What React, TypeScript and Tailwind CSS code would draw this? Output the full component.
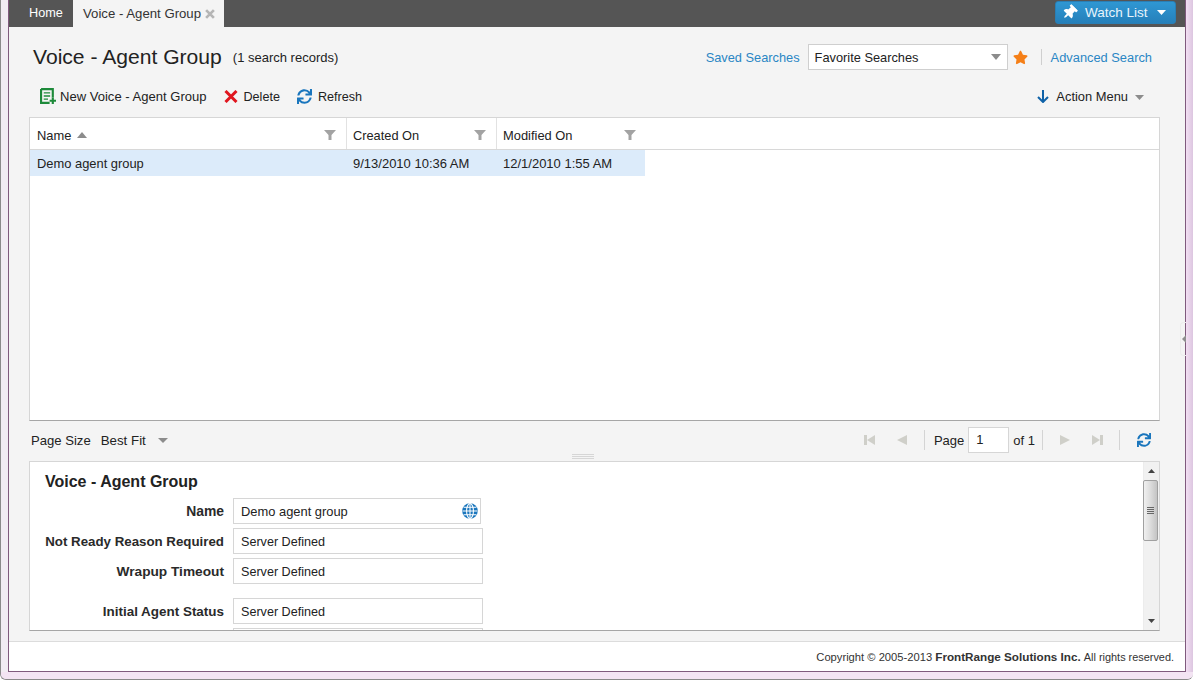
import React from "react";
import { FaSync, FaStar, FaThumbtack } from "react-icons/fa";

const Caret = ({ className = "", color = "#8c8c8c", w = 10, h = 6 }: { className?: string; color?: string; w?: number; h?: number }) => (
  <svg width={w} height={h} viewBox="0 0 10 6" className={className} preserveAspectRatio="none"><path d="M0 0H10L5 6Z" fill={color} /></svg>
);
const Filter = () => (
  <svg width="12" height="10" viewBox="0 0 12 10"><path d="M0 0H12L7.5 5V10H4.5V5Z" fill="#a3a3a3" /></svg>
);
const Nav = ({ dir, bar }: { dir: "l" | "r"; bar?: boolean }) => (
  <svg width="11" height="10" viewBox="0 0 11 10">
    {dir === "l" ? <path d={bar ? "M3 5L11 0V10Z" : "M0 5L10 0V10Z"} fill="#cfcfc9" /> : <path d={bar ? "M0 0L8 5L0 10Z" : "M0 0L10 5L0 10Z"} fill="#cfcfc9" />}
    {bar && <rect x={dir === "l" ? 0 : 8} y="0" width="3" height="10" fill="#cfcfc9" />}
  </svg>
);
const Sep = () => <div className="w-px h-[20px] bg-[#d4d4d4]" />;

const Field = ({ value, w = "w-[250px]", children, textClass = "text-[12.6px] pt-[2px]" }: { value: string; w?: string; children?: React.ReactNode; textClass?: string }) => (
  <div className={`${w} h-[26px] shrink-0 border border-[#d6d6d6] bg-white pl-[7px] flex items-center justify-between pr-[2px] leading-none`}>
    <span className={textClass}>{value}</span>
    {children}
  </div>
);

const Row = ({ label, children, className = "", labelClass = "text-[13.3px] pt-[2px]" }: { label: string; children: React.ReactNode; className?: string; labelClass?: string }) => (
  <div className={`flex items-center ${className}`}>
    <div className={`w-[179px] text-right font-bold text-[#2a2a2a] mr-[9px] shrink-0 whitespace-nowrap ${labelClass}`}>{label}</div>
    {children}
  </div>
);

export default function App() {
  return (
    <div className="w-[1193px] h-[680px] overflow-hidden flex flex-col text-[13px] text-[#222] bg-[#f1e3f1] rounded-b-[6px] border-b border-l border-[#8a8a8a]" style={{ fontFamily: '"Liberation Sans", Arial, sans-serif' }}>
      <div className="flex flex-1 min-h-0">
        <div className="w-[7px] shrink-0 bg-[#f1ecf3]" />
        <div className="w-[1178px] shrink-0 flex flex-col border-l border-r border-b border-[#7f5a7d] bg-[#f4f4f4]">
          {/* tab bar */}
          <div className="h-[27px] shrink-0 bg-[#555555] flex items-stretch">
            <div className="w-[64px] pl-[20px] flex items-center text-white text-[12.7px]">Home</div>
            <div className="w-[151px] pl-[10px] bg-[#f4f4f4] flex items-center text-[#333]">
              <span className="text-[13.2px]">Voice - Agent Group</span>
              <svg width="10" height="10" viewBox="0 0 9 9" className="ml-[4px]"><path d="M1 1L8 8M8 1L1 8" stroke="#b5b5b5" strokeWidth="2.4" /></svg>
            </div>
            <div className="flex-1" />
            <div className="mt-px mr-[9px] w-[121px] h-[23px] rounded-[3px] bg-gradient-to-b from-[#2f97d3] to-[#2680ba] border border-[#2a7fb5] flex items-center text-white text-[13.5px]">
              <FaThumbtack size={15} color="#fff" className="ml-[6px] rotate-45" />
              <span className="ml-[8px] pt-[1px] text-[#e8f4fb]">Watch List</span>
              <Caret color="#fff" w={9} h={5} className="ml-[9px]" />
            </div>
          </div>

          {/* heading */}
          <div className="h-[53px] shrink-0 flex items-center pl-[24px] pr-[33px] pt-[7px]">
            <div className="text-[21.1px] text-[#222]">Voice - Agent Group</div>
            <div className="ml-[11px] pt-[2px]">(1 search records)</div>
            <div className="flex-1" />
            <span className="text-[#2a86c4] mr-[8px] text-[12.8px] pt-[2px]">Saved Searches</span>
            <div className="w-[200px] h-[26px] border border-[#cfcfcf] bg-white pl-[6px] pr-[6px] flex items-center justify-between">
              <span className="text-[12.8px] pt-[2px]">Favorite Searches</span>
              <Caret color="#8c8c8c" w={10} h={6} />
            </div>
            <FaStar size={15} color="#f57f17" className="ml-[5px]" />
            <div className="w-px h-[16px] bg-[#cfcfcf] ml-[13px] mr-[9px]" />
            <span className="text-[#2a86c4] text-[12.85px] pt-[2px]">Advanced Search</span>
          </div>

          {/* toolbar */}
          <div className="h-[37px] shrink-0 flex items-center pl-[31px] pr-[41px] pb-[5px]">
            <svg width="16" height="16" viewBox="0 0 15 15" className="shrink-0">
              <path d="M1 1H12V9M9 14H1V1" fill="none" stroke="#1d8a3a" strokeWidth="2" />
              <path d="M3.5 4.5H9.5M3.5 7.5H9.5M3.5 10.5H7.5" stroke="#1d8a3a" strokeWidth="1.2" />
              <path d="M12 9V15M9 12H15" stroke="#1d8a3a" strokeWidth="2" />
            </svg>
            <span className="ml-[4px] text-[13.05px] pt-[1px]">New Voice - Agent Group</span>
            <svg width="14" height="13" viewBox="0 0 14 13" className="ml-[17px]"><path d="M1.5 1L12.5 12M12.5 1L1.5 12" stroke="#e0161f" strokeWidth="3" /></svg>
            <span className="ml-[6px] text-[12.6px] pt-[2px]">Delete</span>
            <FaSync size={15} color="#1a76bd" className="ml-[17px]" />
            <span className="ml-[6px] text-[12.6px] pt-[2px]">Refresh</span>
            <div className="flex-1" />
            <svg width="12" height="13" viewBox="0 0 12 13"><path d="M6 0V12M1 7L6 12L11 7" fill="none" stroke="#0f62a8" strokeWidth="2" /></svg>
            <span className="ml-[7px] text-[12.9px] pt-[1px]">Action Menu</span>
            <Caret color="#8c8c8c" w={9} h={5} className="ml-[7px] mt-[2px]" />
          </div>

          {/* grid */}
          <div className="mx-[20px] w-[1131px] h-[304px] shrink-0 bg-white border border-[#d6d6d6] border-b-[#a6a6a6] flex flex-col">
            <div className="h-[32px] shrink-0 flex border-b border-[#d8d8d8]">
              <div className="w-[317px] pl-[7px] pr-[10px] pt-[3px] flex items-center border-r border-[#e2e2e2]">
                <span className="text-[12.9px] pt-[1px]">Name</span>
                <Caret color="#8c8c8c" w={10} h={6} className="ml-[6px] rotate-180" />
                <div className="flex-1" /><Filter />
              </div>
              <div className="w-[150px] pl-[6px] pr-[10px] pt-[3px] flex items-center border-r border-[#e2e2e2]">
                <span className="text-[12.8px] pt-[1px]">Created On</span><div className="flex-1" /><Filter />
              </div>
              <div className="w-[149px] pl-[6px] pr-[10px] pt-[3px] flex items-center">
                <span className="text-[12.9px] pt-[1px]">Modified On</span><div className="flex-1" /><Filter />
              </div>
            </div>
            <div className="h-[26px] w-[615px] bg-[#dcebfa] flex items-center">
              <div className="w-[317px] pl-[7px] pt-[1px] text-[12.9px]">Demo agent group</div>
              <div className="w-[150px] pl-[6px] pt-[1px]">9/13/2010 10:36 AM</div>
              <div className="pl-[6px] pt-[1px]">12/1/2010 1:55 AM</div>
            </div>
          </div>

          {/* pager */}
          <div className="relative h-[40px] shrink-0 mx-[20px] w-[1131px] flex items-center pl-[2px] pr-[9px] pb-[2px]">
            <span className="pt-[1px] text-[13.1px]">Page Size</span>
            <span className="ml-[10px] pt-[1px] text-[13.3px]">Best Fit</span>
            <Caret color="#8c8c8c" w={10} h={5} className="ml-[12px]" />
            <div className="flex-1" />
            <Nav dir="l" bar />
            <div className="ml-[22px]"><Nav dir="l" /></div>
            <div className="ml-[16px]"><Sep /></div>
            <span className="ml-[9px] pt-[1px]">Page</span>
            <div className="ml-[4px] w-[41px] h-[26px] bg-white border border-[#d6d6d6] pl-[7px] flex items-center">1</div>
            <span className="ml-[4px] pt-[1px]">of 1</span>
            <div className="ml-[7px]"><Sep /></div>
            <div className="ml-[17px]"><Nav dir="r" /></div>
            <div className="ml-[21px]"><Nav dir="r" bar /></div>
            <div className="ml-[16px]"><Sep /></div>
            <FaSync size={14} color="#1a76bd" className="ml-[17px]" />
            <div className="absolute left-[543px] bottom-[2px] w-[22px] flex flex-col gap-px">
              <div className="h-px bg-[#d6d6d6]" /><div className="h-px bg-[#d6d6d6]" /><div className="h-px bg-[#d6d6d6]" />
            </div>
          </div>

          {/* detail */}
          <div className="mx-[20px] w-[1131px] h-[170px] shrink-0 bg-white border border-[#d6d6d6] border-b-[#a6a6a6] flex overflow-hidden">
            <div className="flex-1 pl-[15px] min-w-0">
              <div className="h-[36px] pt-[10px] text-[16px] leading-[20px] font-bold text-[#222]">Voice - Agent Group</div>
              <Row label="Name" labelClass="text-[13.9px]">
                <Field value="Demo agent group" w="w-[248px]" textClass="text-[12.9px] pt-[2px]">
                  <svg width="16" height="16" viewBox="0 0 15 15">
                    <circle cx="7.5" cy="7.5" r="7.3" fill="#1a76bd" />
                    <g fill="none" stroke="#fff" strokeWidth="1">
                      <ellipse cx="7.5" cy="7.5" rx="3.2" ry="7" />
                      <path d="M7.5 0.5V14.5M0.5 7.5H14.5M1.5 4H13.5M1.5 11H13.5" />
                    </g>
                  </svg>
                </Field>
              </Row>
              <Row label="Not Ready Reason Required" className="mt-[4px]"><Field value="Server Defined" /></Row>
              <Row label="Wrapup Timeout" className="mt-[4px]" labelClass="text-[13.7px] pt-[2px]"><Field value="Server Defined" /></Row>
              <Row label="Initial Agent Status" className="mt-[14px]" labelClass="text-[13.45px] pt-[2px]"><Field value="Server Defined" /></Row>
              <div className="ml-[188px] mt-[4px] w-[250px] h-[26px] border border-[#d6d6d6]" />
            </div>
            <div className="w-[16px] shrink-0 bg-[#f1f1f1] border-l border-[#ececec] flex flex-col items-center">
              <Caret color="#444" w={7} h={4} className="rotate-180 mt-[7px]" />
              <div className="mt-[7px] mr-[2px] w-[15px] h-[61px] shrink-0 rounded-[2px] border border-[#a0a0a0] bg-gradient-to-r from-[#f0f0f0] via-[#dcdcdc] to-[#c4c4c4] flex flex-col items-center justify-center gap-px">
                <div className="w-[7px] h-px bg-[#666]" /><div className="w-[7px] h-px bg-[#666]" /><div className="w-[7px] h-px bg-[#666]" /><div className="w-[7px] h-px bg-[#666]" />
              </div>
              <div className="flex-1" />
              <Caret color="#444" w={7} h={4} className="mb-[7px]" />
            </div>
          </div>

          <div className="h-[10px] shrink-0" />
          {/* footer */}
          <div className="flex-1 bg-white border-t border-[#dcdcdc] flex items-center justify-end pr-[11px] text-[11.2px] text-[#333]">
            <span>Copyright © 2005-2013 <b className="text-[11.7px]">FrontRange Solutions Inc.</b> <span className="text-[10.9px]">All rights reserved.</span></span>
          </div>
        </div>
        <div className="relative flex-1 bg-gradient-to-r from-[#f3dff3] to-[#dcc6e0]">
          <div className="absolute left-[-6px] top-[322px] w-[6px] h-[34px] flex items-center justify-center border-l border-y border-[#ececec] rounded-l-[4px]">
            <svg width="4" height="8" viewBox="0 0 4 8"><path d="M0 4L4 0V8Z" fill="#8f8f8f" /></svg>
          </div>
        </div>
      </div>
      <div className="h-[7px] shrink-0 bg-[#f3e4f3]" />
    </div>
  );
}
